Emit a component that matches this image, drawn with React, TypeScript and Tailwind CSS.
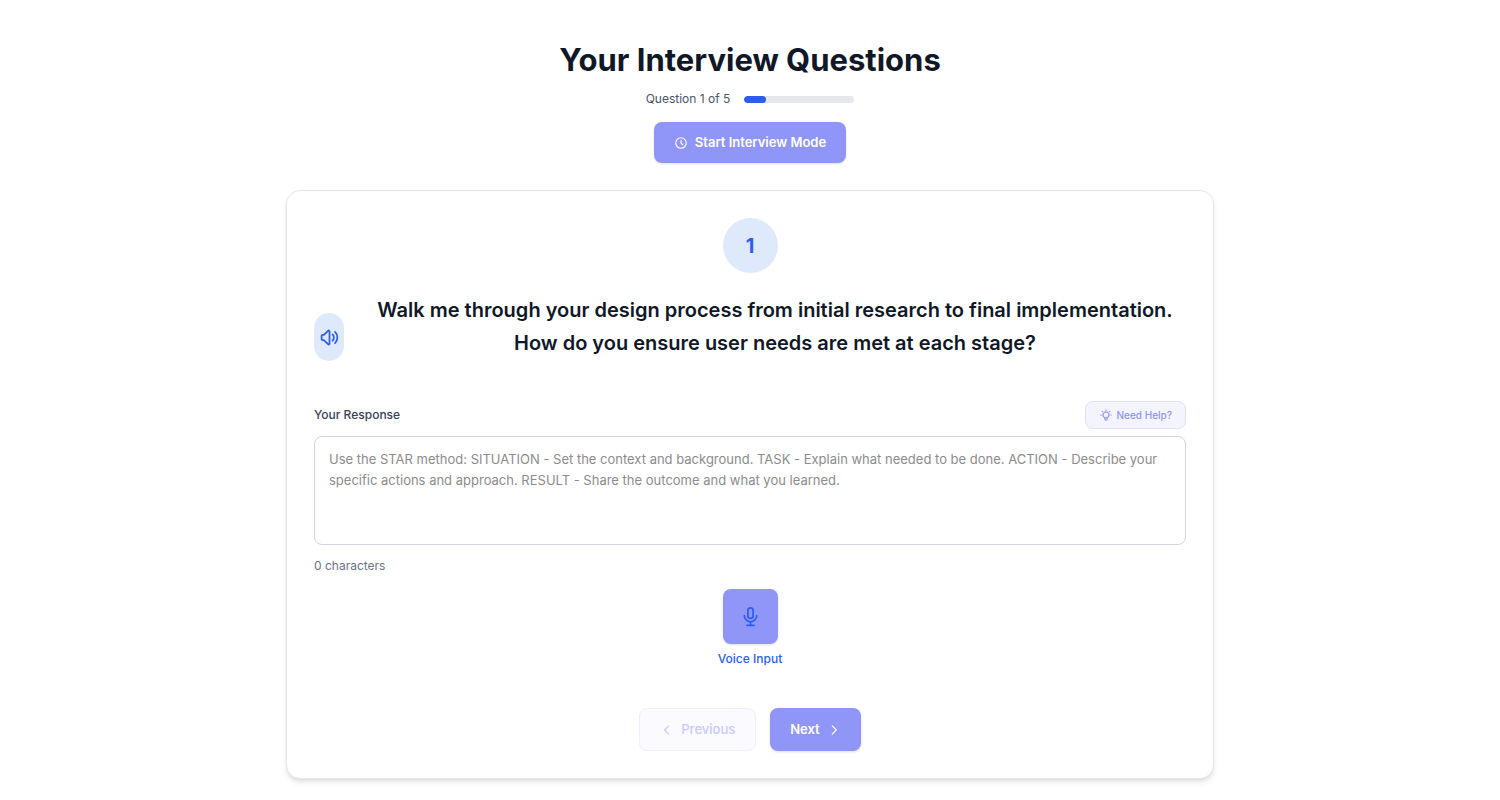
import { useState } from "react";
import {
    HiOutlineChevronLeft,
    HiOutlineChevronRight,
    HiOutlineClock,
    HiOutlineLightBulb,
    HiOutlineMicrophone,
    HiOutlineVolumeUp,
} from "react-icons/hi";

const TOTAL_QUESTIONS = 5;

const QUESTION =
    "Walk me through your design process from initial research to final implementation. How do you ensure user needs are met at each stage?";

const PLACEHOLDER =
    "Use the STAR method: SITUATION - Set the context and background. TASK - Explain what needed to be done. ACTION - Describe your specific actions and approach. RESULT - Share the outcome and what you learned.";

function Progress({ current, total }: { current: number; total: number }) {
    return (
        <div className="mt-2.5 flex items-center justify-center gap-3.5">
            <span className="text-xs leading-[18px] text-gray-600">
                Question {current} of {total}
            </span>
            <div className="h-[7px] w-[110px] overflow-hidden rounded-full bg-gray-200">
                <div className="h-full rounded-full bg-[#2c5df2]" style={{ width: `${(current / total) * 100}%` }} />
            </div>
        </div>
    );
}

export default function App() {
    const [response, setResponse] = useState("");

    return (
        <main className="min-h-screen bg-white px-6 pt-10 pb-5 font-[Inter,'Liberation_Sans',sans-serif]">
            <header className="flex flex-col items-center">
                <h1 className="text-[31px] leading-10 font-bold text-gray-900">Your Interview Questions</h1>
                <Progress current={1} total={TOTAL_QUESTIONS} />
                <button className="mt-3.5 flex h-[41px] items-center gap-[7px] rounded-lg bg-[#9096f8] px-5 text-[13px] font-semibold text-white shadow-sm">
                    <HiOutlineClock className="size-3.5" />
                    Start Interview Mode
                </button>
            </header>

            <section className="mx-auto mt-[27px] max-w-[928px] rounded-[14px] border border-gray-200 bg-white p-[27px] shadow-md">
                <div className="mx-auto flex size-[55px] items-center justify-center rounded-full bg-[#dee9fc] text-xl font-bold text-[#2c5df2]">
                    1
                </div>

                <div className="mt-5 flex items-center">
                    <button
                        aria-label="Read question aloud"
                        className="mt-5 flex h-12 w-[30px] shrink-0 items-center justify-center rounded-full bg-[#dee9fc] text-[#2c5df2]"
                    >
                        <HiOutlineVolumeUp className="size-[21px]" />
                    </button>
                    <h2 className="ml-5 flex-1 text-center text-xl leading-[33px] font-semibold text-gray-900">{QUESTION}</h2>
                </div>

                <div className="mt-10 flex items-center justify-between">
                    <label htmlFor="response" className="text-xs leading-[18px] font-medium text-gray-700">
                        Your Response
                    </label>
                    <button className="flex h-7 items-center gap-1 rounded-lg border border-[#dddffd] bg-[#f4f4fe] px-[13px] text-[10px] font-medium text-[#9096f8]">
                        <HiOutlineLightBulb className="size-3.5" />
                        Need Help?
                    </button>
                </div>
                <textarea
                    id="response"
                    value={response}
                    onChange={(e) => setResponse(e.target.value)}
                    placeholder={PLACEHOLDER}
                    className="mt-[7px] block h-[109px] w-full resize-none rounded-lg border border-gray-300 px-3.5 py-3 text-[13px] leading-[21px] text-gray-900 placeholder:text-[#8c8c8c]"
                />
                <p className="mt-3 text-xs leading-[18px] text-gray-500">{response.length} characters</p>

                <div className="mt-3.5 flex flex-col items-center">
                    <button
                        aria-labelledby="voice-label"
                        className="flex size-[55px] items-center justify-center rounded-lg bg-[#9096f8] text-[#2c5df2] shadow-sm"
                    >
                        <HiOutlineMicrophone className="size-[21px]" />
                    </button>
                    <span id="voice-label" className="mt-1.5 text-xs leading-[18px] font-medium text-[#2c5df2]">
                        Voice Input
                    </span>
                </div>

                <div className="mt-10 flex justify-center gap-3.5">
                    <button
                        disabled
                        className="flex h-[43px] items-center gap-[7px] rounded-lg border border-[#eeeffe] bg-[#fafaff] px-5 text-[13px] font-medium text-[#c7cafb]"
                    >
                        <HiOutlineChevronLeft className="size-3.5" />
                        Previous
                    </button>
                    <button className="flex h-[43px] items-center gap-[7px] rounded-lg bg-[#9096f8] px-5 text-[13px] font-semibold text-white shadow-sm">
                        Next
                        <HiOutlineChevronRight className="size-3.5" />
                    </button>
                </div>
            </section>
        </main>
    );
}
